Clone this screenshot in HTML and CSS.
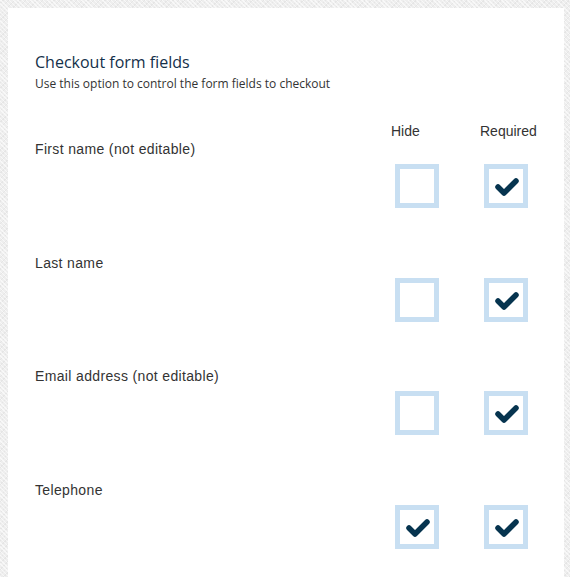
FILE: index.html
```html
<!DOCTYPE html>
<html>
<head>
<meta charset="utf-8">
<link rel="stylesheet" href="styles.css">
</head>
<body>
<div class="card">
  <h1 class="title">Checkout form fields</h1>
  <p class="subtitle">Use this option to control the form fields to checkout</p>
  <div class="fields">
    <div class="head"></div>
    <div class="head">Hide</div>
    <div class="head">Required</div>

    <div class="label">First name (not editable)</div>
    <div class="spacer"></div>
    <div class="cell"><span class="box"></span></div>
    <div class="cell"><span class="box"><svg viewBox="0 0 34 34"><polyline points="9,18 15,24 27,12"/></svg></span></div>

    <div class="label">Last name</div>
    <div class="spacer"></div>
    <div class="cell"><span class="box"></span></div>
    <div class="cell"><span class="box"><svg viewBox="0 0 34 34"><polyline points="9,18 15,24 27,12"/></svg></span></div>

    <div class="label">Email address (not editable)</div>
    <div class="spacer"></div>
    <div class="cell"><span class="box"></span></div>
    <div class="cell"><span class="box"><svg viewBox="0 0 34 34"><polyline points="9,18 15,24 27,12"/></svg></span></div>

    <div class="label">Telephone</div>
    <div class="spacer"></div>
    <div class="cell"><span class="box"><svg viewBox="0 0 34 34"><polyline points="9,18 15,24 27,12"/></svg></span></div>
    <div class="cell"><span class="box"><svg viewBox="0 0 34 34"><polyline points="9,18 15,24 27,12"/></svg></span></div>
  </div>
</div>
</body>
</html>
```
FILE: styles.css
```css
html, body {
  margin: 0;
  padding: 0;
  height: 100%;
  overflow: hidden;
}
body {
  background-color: #eeeeee;
  background-image:
    repeating-linear-gradient(45deg, rgba(255,255,255,0.6) 0 1px, transparent 1px 3px),
    repeating-linear-gradient(-45deg, rgba(220,220,220,0.5) 0 1px, transparent 1px 4px);
  font-family: "Liberation Sans", Arial, sans-serif;
  color: #333333;
}
.card {
  background: #ffffff;
  margin: 8px 6px 0 8px;
  padding: 43px 0 0 27px;
  min-height: 600px;
  box-sizing: border-box;
}
.title {
  margin: 0;
  font-family: "Open Sans", sans-serif;
  font-weight: 400;
  font-size: 16px;
  line-height: 22px;
  color: #14304a;
}
.subtitle {
  margin: 3px 0 0;
  font-family: "Open Sans", sans-serif;
  font-size: 12px;
  line-height: 16px;
  color: #333333;
}
.fields {
  display: grid;
  grid-template-columns: 1fr 89px 84px;
  margin-top: 31px;
}
.head {
  font-size: 14px;
  line-height: 16px;
  color: #333333;
  margin-bottom: 2px;
}
.label {
  grid-column: 1 / -1;
  font-size: 14px;
  line-height: 16px;
  letter-spacing: 0.35px;
  color: #333333;
}
.cell {
  padding-top: 7px;
  padding-bottom: 46.5px;
}
.box {
  display: block;
  width: 44px;
  height: 44px;
  margin-left: 4px;
  box-sizing: border-box;
  border: 5px solid #c8dff2;
  background: #ffffff;
}
.box svg {
  display: block;
  width: 34px;
  height: 34px;
}
.box polyline {
  fill: none;
  stroke: #06344f;
  stroke-width: 5.5;
  stroke-linecap: round;
  stroke-linejoin: round;
}
```
